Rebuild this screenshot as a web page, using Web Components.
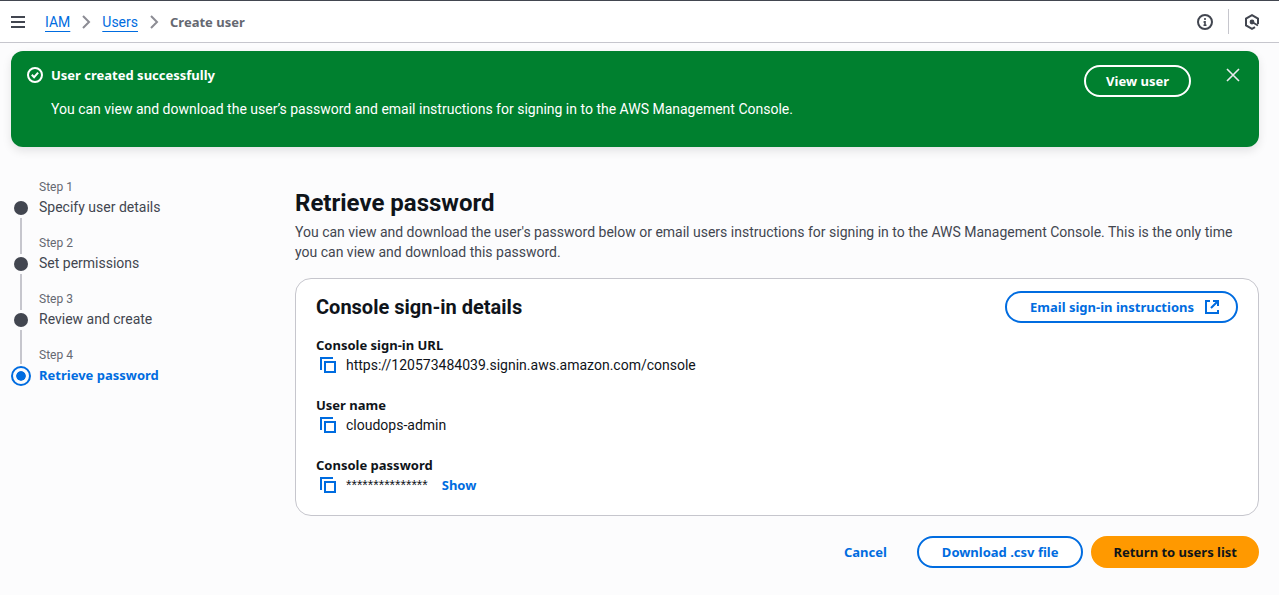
<!DOCTYPE html>
<html lang="en">
<head>
<meta charset="utf-8">
<title>Create user | IAM</title>
<style>
  body {
    --text: #0f141a;
    --text-soft: #424650;
    --text-faint: #656871;
    --link: #006ce0;
    --line: #c6c6cd;
    --bold-font: "Noto Sans", "Open Sans", sans-serif;
    margin: 0;
    min-height: 100vh;
    background: #fcfcfd;
    color: var(--text);
    font: 14px/20px Roboto, "Noto Sans", sans-serif;
  }
</style>
</head>
<body>
<iam-page></iam-page>

<script>
const ICONS = {
  menu: '<path d="M1 3h14M1 8h14M1 13h14"/>',
  chevron: '<path d="m5 2 6 6-6 6"/>',
  info: '<circle cx="8" cy="8" r="7"/><path d="M8 7v5M8 4v2M6.5 8H8M6.5 11.3h3" stroke-width="1.6"/>',
  hexagon: '<path d="M14 10V4.600L8 1.200 2 4.600v6.800l6 3.400 3-1.700"/><path d="m8 8 6 3.500"/><circle cx="8" cy="8" r="1.400" fill="currentColor"/>',
  success: '<circle cx="8" cy="8" r="7"/><path d="m4.800 7.800 2.300 2.400 4-4.600"/>',
  close: '<path d="m2 2 12 12M14 2 2 14" stroke-width="1.6"/>',
  copy: '<path d="M15 5H5v10h10z"/><path d="M13 1H1v12"/>',
  external: '<path d="M6 2H2v12h12v-3"/><path d="M9 2h5v5M14 2 7 9"/>'
};

function define(name, css, html) {
  const template = document.createElement('template');
  template.innerHTML = `<style>${css}</style>${html}`;
  customElements.define(name, class extends HTMLElement {
    constructor() {
      super();
      this.attachShadow({ mode: 'open' }).append(template.content.cloneNode(true));
    }
  });
}

customElements.define('ui-icon', class extends HTMLElement {
  connectedCallback() {
    if (this.shadowRoot) return;
    this.attachShadow({ mode: 'open' }).innerHTML = `
      <style>
        :host { display: block; flex: none; width: 16px; height: 16px; }
        svg { display: block; fill: none; stroke: currentColor; stroke-width: 2; }
      </style>
      <svg width="16" height="16" viewBox="0 0 16 16" aria-hidden="true">${ICONS[this.getAttribute('name')]}</svg>`;
  }
});

define('ui-button', `
  :host { display: block; flex: none; color: var(--link); }
  button {
    display: flex; align-items: center; gap: 10px;
    height: 32px; padding: 0 23px;
    border: 2px solid currentColor; border-radius: 16px;
    background: #fff; color: inherit;
    font: 700 13px/20px var(--bold-font); white-space: nowrap; cursor: pointer;
  }
  :host([variant]) button { padding: 0 20px; }
  :host([variant="primary"]) button { background: #ff9900; border-color: #ff9900; color: var(--text); }
  :host([variant="link"]) button { background: none; border-color: transparent; }
  :host([variant="flash"]) { color: #fff; }
  :host([variant="flash"]) button { background: none; }
  :host([icon-end]) button { padding-right: 16px; }
`, '<button type="button"><slot></slot></button>');

customElements.define('ui-icon-button', class extends HTMLElement {
  connectedCallback() {
    if (this.shadowRoot) return;
    this.attachShadow({ mode: 'open' }).innerHTML = `
      <style>
        :host { display: block; flex: none; }
        button { display: block; margin: 0; padding: 0; border: 0; background: none; color: inherit; cursor: pointer; }
      </style>
      <button type="button" aria-label="${this.getAttribute('label')}"><ui-icon name="${this.getAttribute('name')}"></ui-icon></button>`;
  }
});

define('iam-topbar', `
  :host {
    display: flex; align-items: center; justify-content: space-between;
    box-sizing: border-box; height: 43px; padding: 0 19px 0 10px;
    border-top: 1px solid #424650; border-bottom: 1px solid var(--line);
    background: #fff; color: var(--text-soft);
  }
  .start, ol, .tools { display: flex; align-items: center; }
  .start { gap: 19px; }
  ol { gap: 8px; margin: 0; padding: 0; list-style: none; }
  li { display: flex; align-items: center; gap: 8px; }
  li ui-icon { color: #8c8c94; }
  a { color: var(--link); text-decoration: underline; text-underline-offset: 4px; text-decoration-thickness: 1px; }
  .current { color: var(--text-faint); font: 700 13px/20px var(--bold-font); }
  .tools { gap: 15px; }
  .divider { width: 1px; height: 25px; background: var(--line); }
`, `
  <div class="start">
    <ui-icon-button name="menu" label="Open navigation"></ui-icon-button>
    <nav aria-label="Breadcrumbs">
      <ol>
        <li><a href="#iam">IAM</a><ui-icon name="chevron"></ui-icon></li>
        <li><a href="#users">Users</a><ui-icon name="chevron"></ui-icon></li>
        <li><span class="current" aria-current="page">Create user</span></li>
      </ol>
    </nav>
  </div>
  <div class="tools">
    <ui-icon-button name="info" label="Open help panel"></ui-icon-button>
    <span class="divider"></span>
    <ui-icon-button name="hexagon" label="Open assistant"></ui-icon-button>
  </div>
`);

define('iam-flash', `
  :host {
    display: flex; align-items: flex-start;
    padding: 14px 18px 28px 16px;
    border-radius: 12px; background: #00802f; color: #fff;
    box-shadow: 0 4px 10px rgba(0, 7, 22, 0.1);
  }
  .status { margin-top: 2px; }
  .text { flex: 1; padding: 0 16px 0 8px; }
  h2 { margin: 0 0 14px; font: 700 13px/20px var(--bold-font); }
  .close { margin: 2px 0 0 34px; color: #ebebf0; }
`, `
  <ui-icon class="status" name="success"></ui-icon>
  <div class="text">
    <h2><slot name="heading"></slot></h2>
    <slot></slot>
  </div>
  <ui-button variant="flash"><slot name="action"></slot></ui-button>
  <ui-icon-button class="close" name="close" label="Dismiss"></ui-icon-button>
`);

define('wizard-step', `
  :host {
    display: grid; grid-template: 19px 20px 17px / 20px 1fr; column-gap: 8px;
    color: var(--text-soft);
  }
  .label { grid-area: 1 / 2; font-size: 12px; line-height: 16px; color: var(--text-faint); }
  .title { grid-area: 2 / 2; line-height: 18px; }
  .above, .below { width: 2px; background: var(--line); justify-self: center; }
  .above { grid-area: 1 / 1; }
  .below { grid-area: 3 / 1; }
  .dot { grid-area: 2 / 1; place-self: center; width: 14px; height: 14px; border-radius: 50%; background: currentColor; }
  :host([first]) .above, :host([current]) .below { display: none; }
  :host([current]) { color: var(--link); }
  :host([current]) .title { font: 700 13px/18px var(--bold-font); }
  :host([current]) .above { margin-bottom: 2px; }
  :host([current]) .dot { width: 10px; height: 10px; border: 3px solid #fcfcfd; outline: 2px solid currentColor; background-clip: padding-box; }
`, `
  <span class="above"></span><span class="dot"></span><span class="below"></span>
  <span class="label"><slot name="label"></slot></span>
  <span class="title"><slot></slot></span>
`);

define('copy-field', `
  :host { display: block; }
  .name { font: 700 13px/20px var(--bold-font); }
  .value { display: flex; align-items: center; gap: 10px; padding-left: 4px; }
  .copy { color: var(--link); }
`, `
  <div class="name"><slot name="name"></slot></div>
  <div class="value"><ui-icon-button class="copy" name="copy" label="Copy"></ui-icon-button><slot></slot></div>
`);

define('ui-panel', `
  :host { display: block; padding: 12px 20px 20px; border: 1px solid var(--line); border-radius: 16px; background: #fff; }
  header { display: flex; align-items: center; justify-content: space-between; margin-bottom: 12px; }
  h2 { margin: 0; font-size: 20px; line-height: 24px; font-weight: 700; }
  .fields { display: grid; gap: 20px; }
`, `
  <header><h2><slot name="heading"></slot></h2><slot name="action"></slot></header>
  <div class="fields"><slot></slot></div>
`);

define('iam-page', `
  :host { display: block; }
  .body { padding: 8px 20px 27px 11px; }
  .layout { display: grid; grid-template-columns: 284px 1fr; margin-top: 32px; }
  h1 { margin: 10px 0 5px; font-size: 24px; line-height: 28px; font-weight: 700; }
  .intro { margin: 0 0 16px; padding-right: 8px; color: var(--text-soft); }
  .mask { font-family: "Liberation Sans", sans-serif; }
  .show {
    margin-left: 4px; padding: 0; border: 0; background: none; color: var(--link);
    font: 700 13px/20px var(--bold-font); cursor: pointer;
  }
  footer { display: flex; justify-content: flex-end; gap: 8px; margin-top: 20px; }
`, `
  <iam-topbar></iam-topbar>
  <div class="body">
    <iam-flash role="status">
      <span slot="heading">User created successfully</span>
      You can view and download the user’s password and email instructions for signing in to the AWS Management Console.
      <span slot="action">View user</span>
    </iam-flash>
    <div class="layout">
      <nav aria-label="Steps">
        <wizard-step first><span slot="label">Step 1</span>Specify user details</wizard-step>
        <wizard-step><span slot="label">Step 2</span>Set permissions</wizard-step>
        <wizard-step><span slot="label">Step 3</span>Review and create</wizard-step>
        <wizard-step current aria-current="step"><span slot="label">Step 4</span>Retrieve password</wizard-step>
      </nav>
      <main>
        <h1>Retrieve password</h1>
        <p class="intro">You can view and download the user's password below or email users instructions for signing in to the AWS Management Console. This is the only time you can view and download this password.</p>
        <ui-panel>
          <span slot="heading">Console sign-in details</span>
          <ui-button slot="action" icon-end>Email sign-in instructions <ui-icon name="external"></ui-icon></ui-button>
          <copy-field><span slot="name">Console sign-in URL</span><span>https://120573484039.signin.aws.amazon.com/console</span></copy-field>
          <copy-field><span slot="name">User name</span><span>cloudops-admin</span></copy-field>
          <copy-field><span slot="name">Console password</span><span class="mask">***************</span><button class="show" type="button">Show</button></copy-field>
        </ui-panel>
        <footer>
          <ui-button variant="link">Cancel</ui-button>
          <ui-button>Download .csv file</ui-button>
          <ui-button variant="primary">Return to users list</ui-button>
        </footer>
      </main>
    </div>
  </div>
`);
</script>
</body>
</html>
